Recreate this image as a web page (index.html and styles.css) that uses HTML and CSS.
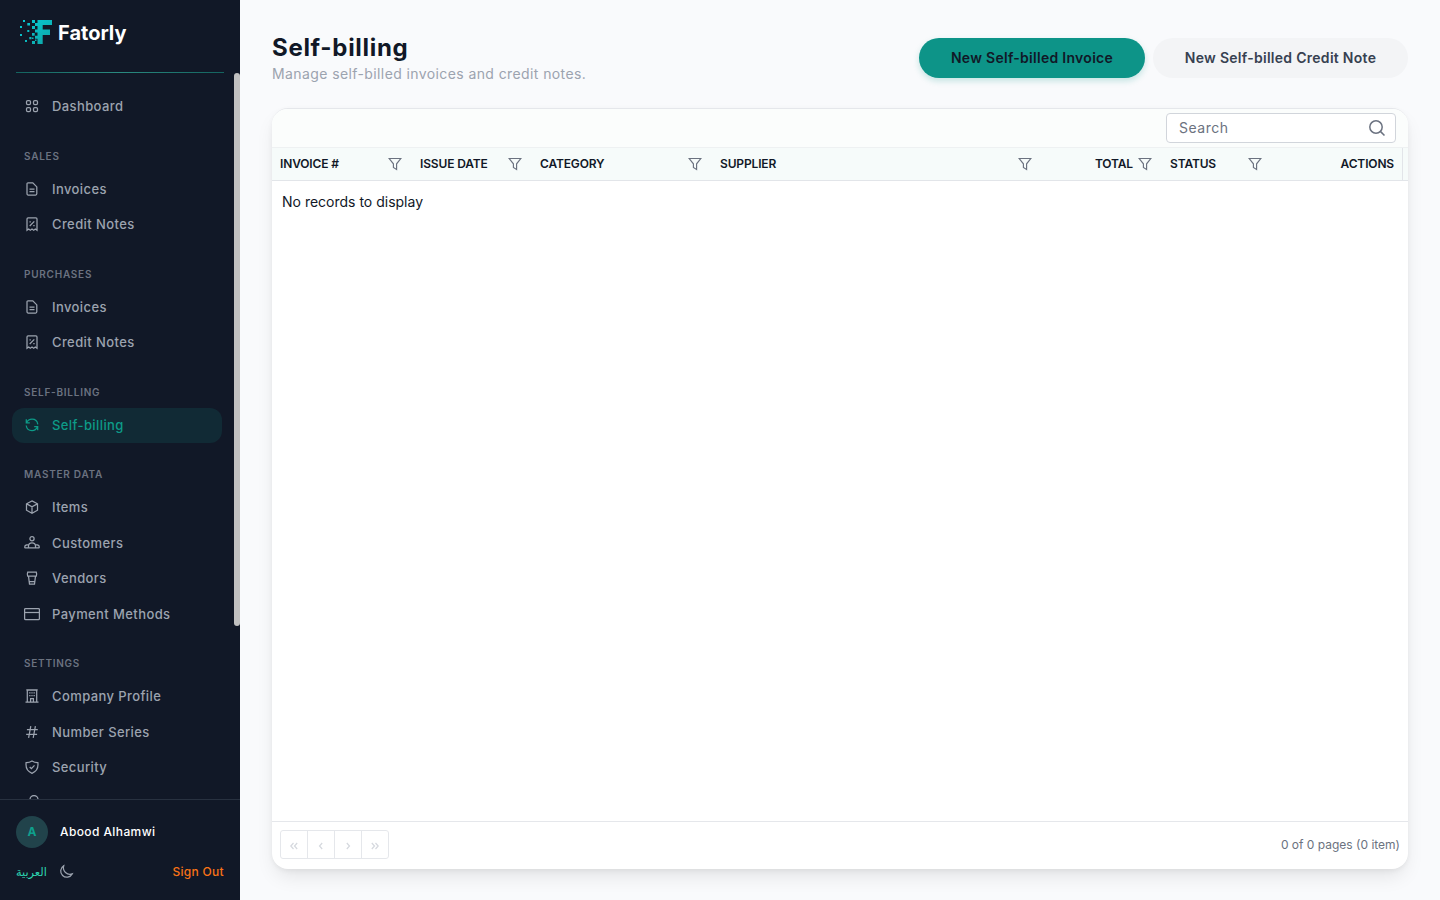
FILE: index.html
```html
<!DOCTYPE html>
<html lang="en">
<head>
    <meta charset="UTF-8">
    <meta name="viewport" content="width=device-width, initial-scale=1.0">
    <title>Self-billing - Fatorly</title>
    <link rel="stylesheet" href="styles.css">
</head>
<body>
    <!-- Shared icons -->
    <svg class="sprite" width="0" height="0">
        <symbol id="i-invoice" viewBox="0 0 16 16"><path d="M4 1.900h4.800l4 4v6.900c0 .7-.5 1.200-1.200 1.200H4.200c-.7 0-1.200-.5-1.200-1.200V3c0-.7.4-1.100 1-1.100zM5.500 8.100h5M5.500 10.700h5"/></symbol>
        <symbol id="i-credit" viewBox="0 0 16 16"><path d="M3 14.200V3c0-.7.4-1.200 1.100-1.200h7.800c.7 0 1.100.5 1.100 1.200v11.200l-1.700-1.200-1.600 1.200L8 13l-1.700 1.200L4.700 13 3 14.200zM5.700 10l4.600-4.600M5.500 5.800h1.300M9.300 9.600h1.300"/></symbol>
        <symbol id="i-filter" viewBox="0 0 14 14"><path d="M1.200 1.500h11.600L8.600 6.800v5.700L5.400 10.500V6.800z"/></symbol>
    </svg>

    <div class="app">
        <aside class="sidebar">
            <div class="brand">
                <svg class="logo" width="32" height="25" viewBox="0 0 32 25">
                    <defs>
                        <linearGradient id="lg" x1="0" y1="0" x2="1" y2="1">
                            <stop offset="0" stop-color="#06cdd8"/>
                            <stop offset="1" stop-color="#0fa5a5"/>
                        </linearGradient>
                    </defs>
                    <path fill="url(#lg)" d="M17.500 0H32v5h-9.300v4.500H30V15h-7.300v9h-5.200zM12 0h3v3h-3zM15 3h3v3h-3zM12 6h3v3h-3zM15 9.500h3v3h-3zM12 13h2.700v2.700H12zM15 15.700h3v3h-3zM12 21h3v3h-3zM15 19.500h1.500V21H15zM7.300 3H10v2.500H7.300zM3 0h2v2H3zM0 6h2v2H0zM7.300 10h2v2h-2zM0 14h2v2H0zM5 20h2v2H5zM9.300 17h2.200v2.200H9.300zM12 17.500h1.500V19H12z"/>
                </svg>
                <span class="brand-name">Fatorly</span>
            </div>
            <div class="brand-line"></div>

            <nav class="nav">
                <a class="nav-item"><svg class="icon" viewBox="0 0 16 16"><rect x="2.500" y="2.500" width="4" height="4" rx="1.300"/><rect x="9.500" y="2.500" width="4" height="4" rx="1.300"/><rect x="2.500" y="9.500" width="4" height="4" rx="1.300"/><rect x="9.500" y="9.500" width="4" height="4" rx="1.300"/></svg>Dashboard</a>

                <h3>SALES</h3>
                <a class="nav-item"><svg class="icon"><use href="#i-invoice"/></svg>Invoices</a>
                <a class="nav-item"><svg class="icon"><use href="#i-credit"/></svg>Credit Notes</a>

                <h3>PURCHASES</h3>
                <a class="nav-item"><svg class="icon"><use href="#i-invoice"/></svg>Invoices</a>
                <a class="nav-item"><svg class="icon"><use href="#i-credit"/></svg>Credit Notes</a>

                <h3>SELF-BILLING</h3>
                <a class="nav-item active"><svg class="icon" viewBox="0 0 16 16"><path d="M2.300 2.300v3.500h3.500M13.700 13.200V9.700h-3.500M2.500 5.700C3.600 3.500 5.600 2.200 8 2.200c3 0 5.400 2.200 5.800 5.100M13.500 9.800c-1 2.400-3.100 3.800-5.500 3.800-3 0-5.400-2.200-5.800-5.100"/></svg>Self-billing</a>

                <h3>MASTER DATA</h3>
                <a class="nav-item"><svg class="icon" viewBox="0 0 16 16"><path d="M8 1.900l5.500 2.900v6.400L8 14.200l-5.500-3V4.800zM2.700 4.900L8 7.700l5.300-2.800M8 7.700v6.300"/></svg>Items</a>
                <a class="nav-item"><svg class="icon" viewBox="0 0 16 16"><circle cx="8" cy="3.700" r="2.100"/><path d="M4.500 12.900V11c0-1.800 1.400-3.200 3.500-3.200s3.500 1.400 3.500 3.200v1.900M.8 12.900v-1.200c0-1.400 1.200-2.200 3.700-2.200M15.200 12.900v-1.200c0-1.400-1.200-2.200-3.700-2.200M.6 12.900h14.800"/></svg>Customers</a>
                <a class="nav-item"><svg class="icon" viewBox="0 0 16 16"><path d="M3.700 2.200h8.600c.5 1.300.5 2.700 0 4H3.700c-.5-1.300-.5-2.700 0-4zM4.500 6.200l1 8h5l1-8M5.200 11.500h5.600"/></svg>Vendors</a>
                <a class="nav-item"><svg class="icon" viewBox="0 0 16 16"><rect x=".6" y="2.500" width="14.800" height="11" rx="1"/><path d="M.5 6.500h15"/></svg>Payment Methods</a>

                <h3>SETTINGS</h3>
                <a class="nav-item"><svg class="icon" viewBox="0 0 16 16"><path d="M1.500 14.200h13M3.300 14.200V2h9.400v12.200M2.300 1.900h11.400M6.600 14v-3.500h2.800V14M5.200 4.800h1.300M9.500 4.800h1.300M5.200 7.500h1.300M9.500 7.500h1.300M7.400 4.800h1.200M7.400 7.500h1.200"/></svg>Company Profile</a>
                <a class="nav-item"><svg class="icon" viewBox="0 0 16 16"><path d="M6.800 2.200L4.600 13.800M11.400 2.200L9.200 13.800M2.900 5.600h10.900M2.200 10.400h10.900"/></svg>Number Series</a>
                <a class="nav-item"><svg class="icon" viewBox="0 0 16 16"><path d="M8 2c1.800 1.300 3.700 1.700 5.900 1.700.6 5-1.200 8.700-5.900 10.600C3.300 12.400 1.500 8.700 2.100 3.700 4.300 3.700 6.200 3.300 8 2zM5.700 8l1.700 1.700 3.100-3.300"/></svg>Security</a>
                <a class="nav-item"><svg class="icon" viewBox="0 0 16 16"><path d="M6 4.500a4 4 0 0 1 8 0v4l1.500 2h-11l1.500-2z"/></svg></a>
                <span class="scroll-thumb"></span>
            </nav>

            <div class="user-panel">
                <div class="user">
                    <span class="avatar">A</span>
                    <span class="user-name">Abood Alhamwi</span>
                </div>
                <div class="user-actions">
                    <span class="lang" lang="ar">العربية</span>
                    <svg class="moon" viewBox="0 0 16 16"><path d="M5.700 1.800a6.100 6.100 0 1 0 8.500 8.100A6.600 6.600 0 0 1 5.700 1.800z"/></svg>
                    <span class="sign-out">Sign Out</span>
                </div>
            </div>
        </aside>

        <main class="content">
            <header class="page-header">
                <div>
                    <h1>Self-billing</h1>
                    <p>Manage self-billed invoices and credit notes.</p>
                </div>
                <div class="buttons">
                    <button class="btn btn-primary">New Self-billed Invoice</button>
                    <button class="btn btn-secondary">New Self-billed Credit Note</button>
                </div>
            </header>

            <section class="grid-card">
                <div class="toolbar">
                    <div class="search">
                        <span>Search</span>
                        <svg width="18" height="18" viewBox="0 0 18 18"><circle cx="8" cy="8" r="6.200"/><path d="M12.600 12.600l3.900 3.900"/></svg>
                    </div>
                </div>
                <div class="grid-head">
                    <div class="col"><span>INVOICE #</span><svg><use href="#i-filter"/></svg></div>
                    <div class="col"><span>ISSUE DATE</span><svg><use href="#i-filter"/></svg></div>
                    <div class="col"><span>CATEGORY</span><svg><use href="#i-filter"/></svg></div>
                    <div class="col"><span>SUPPLIER</span><svg><use href="#i-filter"/></svg></div>
                    <div class="col right"><span>TOTAL</span><svg><use href="#i-filter"/></svg></div>
                    <div class="col"><span>STATUS</span><svg><use href="#i-filter"/></svg></div>
                    <div class="col right last"><span>ACTIONS</span></div>
                </div>
                <div class="grid-body">No records to display</div>
                <div class="pager">
                    <div class="pager-nav">
                        <span><svg viewBox="0 0 10 10"><path d="M4.500 2L1.800 5l2.700 3M8.200 2L5.500 5l2.700 3"/></svg></span>
                        <span><svg viewBox="0 0 10 10"><path d="M6.200 2L3.500 5l2.700 3"/></svg></span>
                        <span><svg viewBox="0 0 10 10"><path d="M3.800 2l2.700 3-2.700 3"/></svg></span>
                        <span><svg viewBox="0 0 10 10"><path d="M1.800 2l2.700 3-2.700 3M5.500 2l2.700 3-2.700 3"/></svg></span>
                    </div>
                    <span class="pager-info">0 of 0 pages (0 item)</span>
                </div>
            </section>
        </main>
    </div>
</body>
</html>
```
FILE: styles.css
```css
* {
    margin: 0;
    padding: 0;
    box-sizing: border-box;
}

body {
    font-family: Inter, "Liberation Sans", sans-serif;
    background-color: #f9fafc;
    color: #111827;
}

svg {
    fill: none;
    stroke: currentColor;
    flex-shrink: 0;
}

.sprite {
    position: absolute;
}

.app {
    display: flex;
    height: 100vh;
    overflow: hidden;
}

/* Sidebar */
.sidebar {
    width: 240px;
    flex-shrink: 0;
    display: flex;
    flex-direction: column;
    background-color: #111827;
}

.brand {
    display: flex;
    height: 72px;
    padding: 20px 20px 0;
    gap: 6px;
}

.logo {
    stroke: none;
}

.brand-name {
    color: #fff;
    font-size: 20px;
    font-weight: 700;
    line-height: 27px;
}

.brand-line {
    height: 1px;
    margin: 0 16px;
    background: linear-gradient(90deg, #14635f, #2a8a80, #14635f);
}

.nav {
    position: relative;
    flex: 1;
    min-height: 0;
    overflow: hidden;
    padding: 16px 18px 0 12px;
}

.nav h3 {
    margin: 24px 12px 8px;
    color: #6b7280;
    font-size: 10px;
    font-weight: 600;
    line-height: 15px;
    letter-spacing: 0.75px;
}

.nav-item {
    display: flex;
    align-items: center;
    gap: 12px;
    height: 35.5px;
    padding: 0 12px 0.6px;
    border-radius: 12px;
    color: #9ca3af;
    font-size: 13px;
    font-weight: 500;
    letter-spacing: 0.4px;
}

.nav-item.active {
    background-color: #112a35;
    color: #0d9b88;
}

.icon {
    width: 16px;
    height: 16px;
    stroke-width: 1.25;
}

.scroll-thumb {
    position: absolute;
    top: 0;
    right: 0;
    width: 6px;
    height: 553px;
    border-radius: 3px;
    background-color: #c1c1c1;
}

.user-panel {
    height: 101px;
    padding: 16px 16px 0;
    border-top: 1px solid #283140;
}

.user {
    display: flex;
    align-items: center;
    gap: 12px;
}

.avatar {
    width: 32px;
    height: 32px;
    border-radius: 50%;
    background-color: #21434b;
    color: #0fa08d;
    font-size: 12px;
    font-weight: 700;
    line-height: 32px;
    text-align: center;
}

.user-name {
    padding-bottom: 2px;
    color: #fff;
    font-size: 12px;
    font-weight: 500;
    letter-spacing: 0.4px;
}

.user-actions {
    display: flex;
    align-items: center;
    height: 20px;
    margin-top: 14px;
    font-size: 12px;
    font-weight: 500;
}

.lang {
    width: 31px;
    color: #2dd4b0;
    font-family: "DejaVu Sans", sans-serif;
    font-size: 11.3px;
    font-weight: 400;
    white-space: nowrap;
}

.moon {
    width: 16px;
    height: 16px;
    margin-left: 11px;
    color: #9ca3af;
    stroke-width: 1.25;
}

.sign-out {
    margin-left: auto;
    padding-bottom: 2px;
    color: #f97316;
    letter-spacing: 0.3px;
}

/* Page */
.content {
    flex: 1;
    display: flex;
    flex-direction: column;
    padding: 32px 32px 31px;
}

.page-header {
    display: flex;
    justify-content: space-between;
    height: 76px;
}

.page-header h1 {
    font-size: 24px;
    font-weight: 700;
    line-height: 32px;
    letter-spacing: 0.7px;
}

.page-header p {
    color: #9ca3af;
    font-size: 14px;
    line-height: 20px;
    letter-spacing: 0.4px;
}

.buttons {
    display: flex;
    gap: 8px;
    height: 40px;
    margin-top: 6px;
}

.btn {
    padding-bottom: 2px;
    border: none;
    border-radius: 20px;
    font-family: inherit;
    font-size: 14px;
    font-weight: 600;
    letter-spacing: 0.28px;
}

.btn-primary {
    width: 226px;
    background-color: #0d9488;
    color: #111827;
    box-shadow: 0 3px 6px rgba(13, 148, 136, 0.22);
}

.btn-secondary {
    width: 255px;
    background-color: #f3f4f6;
    color: #374151;
}

/* Grid */
.grid-card {
    flex: 1;
    display: flex;
    flex-direction: column;
    overflow: hidden;
    border-top: 1px solid #e5e7eb;
    border-radius: 16px;
    background-color: #fff;
    box-shadow: 0 10px 20px -4px rgba(0, 0, 0, 0.1), 0 2px 5px rgba(0, 0, 0, 0.05);
}

.toolbar {
    display: flex;
    justify-content: flex-end;
    height: 38px;
    padding: 4px 12px 0;
    background-color: #fbfdfc;
}

.search {
    display: flex;
    align-items: center;
    justify-content: space-between;
    width: 230px;
    height: 30px;
    padding: 0 9px 0 12px;
    border: 1px solid #d1d5db;
    border-radius: 4px;
    background-color: #fff;
    color: #6b7280;
    font-size: 14px;
    letter-spacing: 0.5px;
}

.search span {
    padding-bottom: 2px;
}

.search svg {
    stroke-width: 1.5;
}

.grid-head {
    display: grid;
    grid-template-columns: 140px 120px 180px 1fr 120px 110px 131px 5px;
    height: 34px;
    border-top: 1px solid #eef1f2;
    border-bottom: 1px solid #e2e5e9;
    background-color: #f6fbfa;
}

.col {
    display: flex;
    align-items: center;
    justify-content: space-between;
    padding: 0 10px 0 8px;
    font-size: 12px;
    font-weight: 600;
    letter-spacing: -0.15px;
    white-space: nowrap;
}

.col span {
    padding-bottom: 2px;
}

.col svg {
    width: 14px;
    height: 14px;
    color: #6b7280;
    stroke-width: 1.15;
}

.col.right {
    justify-content: flex-end;
    gap: 5px;
}

.col.last {
    padding-right: 8px;
    border-right: 1px solid #e2e5e9;
}

.grid-body {
    flex: 1;
    padding: 12px 10px;
    font-size: 14px;
    line-height: 18px;
}

.pager {
    display: flex;
    align-items: center;
    justify-content: space-between;
    height: 48px;
    padding: 0 8px 2px;
    border-top: 1px solid #e5e7eb;
}

.pager-nav {
    display: flex;
    height: 29px;
    border: 1px solid #e5e7eb;
    border-radius: 3px;
}

.pager-nav span {
    display: flex;
    align-items: center;
    justify-content: center;
    width: 27px;
    padding-top: 2px;
    border-right: 1px solid #e5e7eb;
    color: #d5d8de;
}

.pager-nav span:last-child {
    width: 26px;
    border-right: none;
}

.pager-nav svg {
    width: 10px;
    height: 10px;
    stroke-width: 1.2;
}

.pager-info {
    color: #6b7280;
    font-size: 12px;
}
```
